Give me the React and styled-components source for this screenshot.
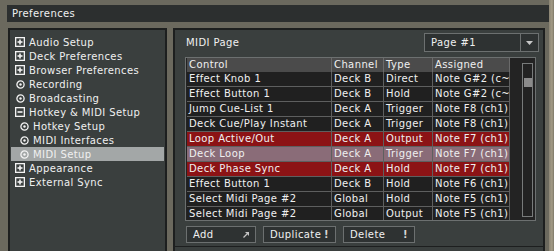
import React from "react";
import styled, { createGlobalStyle } from "styled-components";

const GlobalStyle = createGlobalStyle`
  html, body {
    margin: 0;
    padding: 0;
    background: #6b695e;
  }
  body {
    font-family: "DejaVu Sans", Verdana, sans-serif;
    font-size: 10px;
    letter-spacing: 0.4px;
    color: #f0f0f0;
  }
`;

// colours pulled from the screenshot
const c = {
  frame: "#6b695e",
  title: "#2c2f2f",
  panel: "#3a3f3e",
  panelBorder: "#1d1f1f",
  line: "#5e5f5f",
  edge: "#6c7070",
  row: "#202020",
  head: "#4b4b4b",
  red: "#8c1315",
  mauve: "#8a6c78",
  selected: "#a3a7a7",
  button: "#2e3232",
};

const Page = styled.div`
  width: 554px;
  height: 251px;
  display: flex;
  overflow: hidden;
`;

const Frame = styled.div`
  width: 549px;
  height: 251px;
  box-sizing: border-box;
  padding: 5px 0 0 7px;
  display: flex;
  flex-direction: column;
  background: ${c.frame};
`;

// sliver of the window behind, at the right edge
const BackEdge = styled.div`
  flex: 1;
  background: linear-gradient(90deg, #8a8474 0, #a39b86 60%, #7d7868 100%);
`;

const TitleBar = styled.div`
  height: 17px;
  flex-shrink: 0;
  display: flex;
  align-items: center;
  padding-left: 5px;
  background: ${c.title};
`;

const Content = styled.div`
  flex: 1;
  display: flex;
  gap: 6px;
  margin-top: 6px;
  padding-left: 1px;
  min-height: 0;
`;

const Panel = styled.div`
  box-sizing: border-box;
  width: ${(p) => p.width}px;
  height: 240px;
  border: 2px solid ${c.panelBorder};
  background: ${c.panel};
`;

const NavList = styled.div`
  padding: 5px 1px;
  display: flex;
  flex-direction: column;
`;

const NavItem = styled.div`
  height: 14px;
  display: flex;
  align-items: center;
  gap: 4px;
  padding-left: ${(p) => (p.sub ? 8 : 4)}px;
  background: ${(p) => (p.active ? c.selected : "transparent")};
  white-space: nowrap;
`;

const IconSlot = styled.span`
  width: 10px;
  height: 10px;
  display: flex;
  align-items: center;
  justify-content: center;
`;

const BoxIcon = ({ open }) => (
  <svg width="10" height="10" viewBox="0 0 10 10">
    <rect x="0.65" y="0.65" width="8.7" height="8.7" fill="none" stroke="#f4f4f4" strokeWidth="1.3" />
    <line x1="2.5" y1="5" x2="7.5" y2="5" stroke="#f4f4f4" strokeWidth="1.6" />
    {!open && <line x1="5" y1="2.5" x2="5" y2="7.5" stroke="#f4f4f4" strokeWidth="1.6" />}
  </svg>
);

const RingIcon = () => (
  <svg width="9" height="9" viewBox="0 0 9 9">
    <circle cx="4.5" cy="4.5" r="3.6" fill="none" stroke="#f4f4f4" strokeWidth="1.3" />
    <circle cx="4.5" cy="4.5" r="1.2" fill="#f4f4f4" />
  </svg>
);

const RightInner = styled.div`
  padding: 3px 4px 0 10px;
  display: flex;
  flex-direction: column;
`;

const TopRow = styled.div`
  height: 19px;
  display: flex;
  align-items: center;
  justify-content: space-between;
`;

const Label = styled.span`
  margin-left: 1px;
`;

const Dropdown = styled.div`
  width: 115px;
  height: 19px;
  box-sizing: border-box;
  border: 1px solid ${c.edge};
  background: ${c.button};
  display: flex;
  align-items: center;
`;

const DropText = styled.span`
  flex: 1;
  padding-left: 6px;
`;

const DropArrow = styled.span`
  width: 17px;
  height: 100%;
  border-left: 1px solid ${c.edge};
  display: flex;
  align-items: center;
  justify-content: center;
`;

const TableFrame = styled.div`
  margin-top: 5px;
  width: 351px;
  height: 164px;
  box-sizing: border-box;
  border: 1px solid ${c.edge};
  background: #232323;
  padding-left: 1px;
  display: flex;
  overflow: hidden;
`;

const Grid = styled.div`
  width: 323px;
  flex-shrink: 0;
  display: grid;
  grid-template-columns: 145px 52px 49px 77px;
  align-content: start;
`;

const HeadCell = styled.div`
  height: 14px;
  line-height: 14px;
  box-sizing: border-box;
  padding-left: 2px;
  background: ${c.head};
  border-right: 1px solid #6a6a6a;
  white-space: nowrap;
  overflow: hidden;
`;

const Cell = styled.div`
  height: 15px;
  line-height: 14px;
  box-sizing: border-box;
  padding-left: 2px;
  background: ${(p) => (p.tone === "red" ? c.red : p.tone === "mauve" ? c.mauve : c.row)};
  border-right: 1px solid ${c.line};
  border-bottom: 1px solid ${c.line};
  white-space: nowrap;
  overflow: hidden;
`;

const ScrollCol = styled.div`
  flex: 1;
  padding: 5px 2px 3px 12px;
  display: flex;
`;

const Track = styled.div`
  width: 11px;
  box-sizing: border-box;
  border: 1px solid #787b7b;
  background: #222;
`;

const Thumb = styled.div`
  width: 8px;
  height: 9px;
  margin: 14px 0 0 1px;
  background: #8b8b8b;
`;

const ButtonRow = styled.div`
  display: flex;
  gap: 7px;
  margin-top: 5px;
  padding-left: 1px;
`;

const Button = styled.div`
  width: ${(p) => p.width}px;
  height: 17px;
  box-sizing: border-box;
  border: 1px solid ${c.edge};
  background: ${c.button};
  display: flex;
  align-items: center;
  justify-content: space-between;
  padding: 0 6px;
`;

const Bang = styled.span`
  font-weight: bold;
  color: #d8d8d8;
`;

const Divider = styled.div`
  margin: 3px -4px 0 -10px;
  height: 1px;
  background: ${c.panelBorder};
`;

const nav = [
  { label: "Audio Setup", icon: "plus" },
  { label: "Deck Preferences", icon: "plus" },
  { label: "Browser Preferences", icon: "plus" },
  { label: "Recording", icon: "ring" },
  { label: "Broadcasting", icon: "ring" },
  { label: "Hotkey & MIDI Setup", icon: "minus" },
  { label: "Hotkey Setup", icon: "ring", sub: true },
  { label: "MIDI Interfaces", icon: "ring", sub: true },
  { label: "MIDI Setup", icon: "ring", sub: true, active: true },
  { label: "Appearance", icon: "plus" },
  { label: "External Sync", icon: "plus" },
];

const rows = [
  ["Effect Knob 1", "Deck B", "Direct", "Note G#2 (c~"],
  ["Effect Button 1", "Deck B", "Hold", "Note G#2 (c~"],
  ["Jump Cue-List 1", "Deck A", "Trigger", "Note F8 (ch1)"],
  ["Deck Cue/Play Instant", "Deck A", "Trigger", "Note F8 (ch1)"],
  ["Loop Active/Out", "Deck A", "Output", "Note F7 (ch1)", "red"],
  ["Deck Loop", "Deck A", "Trigger", "Note F7 (ch1)", "mauve"],
  ["Deck Phase Sync", "Deck A", "Hold", "Note F7 (ch1)", "red"],
  ["Effect Button 1", "Deck B", "Hold", "Note F6 (ch1)"],
  ["Select Midi Page #2", "Global", "Hold", "Note F5 (ch1)"],
  ["Select Midi Page #2", "Global", "Output", "Note F5 (ch1)"],
];

const NavIcon = ({ kind }) =>
  kind === "ring" ? <RingIcon /> : <BoxIcon open={kind === "minus"} />;

export default function App() {
  return (
    <>
      <GlobalStyle />
      <Page>
        <Frame>
          <TitleBar>Preferences</TitleBar>
          <Content>
            <Panel width={159}>
              <NavList>
                {nav.map((n) => (
                  <NavItem key={n.label} sub={n.sub} active={n.active}>
                    <IconSlot>
                      <NavIcon kind={n.icon} />
                    </IconSlot>
                    {n.label}
                  </NavItem>
                ))}
              </NavList>
            </Panel>
            <Panel width={372}>
              <RightInner>
                <TopRow>
                  <Label>MIDI Page</Label>
                  <Dropdown>
                    <DropText>Page #1</DropText>
                    <DropArrow>
                      <svg width="7" height="4" viewBox="0 0 7 4">
                        <path d="M0 0 H7 L3.5 4 Z" fill="#c8c8c8" />
                      </svg>
                    </DropArrow>
                  </Dropdown>
                </TopRow>
                <TableFrame>
                  <Grid>
                    <HeadCell>Control</HeadCell>
                    <HeadCell>Channel</HeadCell>
                    <HeadCell>Type</HeadCell>
                    <HeadCell>Assigned</HeadCell>
                    {rows.map((r, i) =>
                      r.slice(0, 4).map((v, j) => (
                        <Cell key={i + "-" + j} tone={r[4]}>
                          {v}
                        </Cell>
                      ))
                    )}
                  </Grid>
                  <ScrollCol>
                    <Track>
                      <Thumb />
                    </Track>
                  </ScrollCol>
                </TableFrame>
                <ButtonRow>
                  <Button width={70}>
                    Add
                    <svg width="6" height="6" viewBox="0 0 6 6">
                      <path d="M2 0 H6 V4 Z" fill="#c4c4c4" />
                      <line x1="0.5" y1="5.5" x2="4" y2="2" stroke="#c4c4c4" strokeWidth="1.2" />
                    </svg>
                  </Button>
                  <Button width={73}>
                    Duplicate
                    <Bang>!</Bang>
                  </Button>
                  <Button width={72}>
                    Delete
                    <Bang>!</Bang>
                  </Button>
                </ButtonRow>
                <Divider />
              </RightInner>
            </Panel>
          </Content>
        </Frame>
        <BackEdge />
      </Page>
    </>
  );
}
